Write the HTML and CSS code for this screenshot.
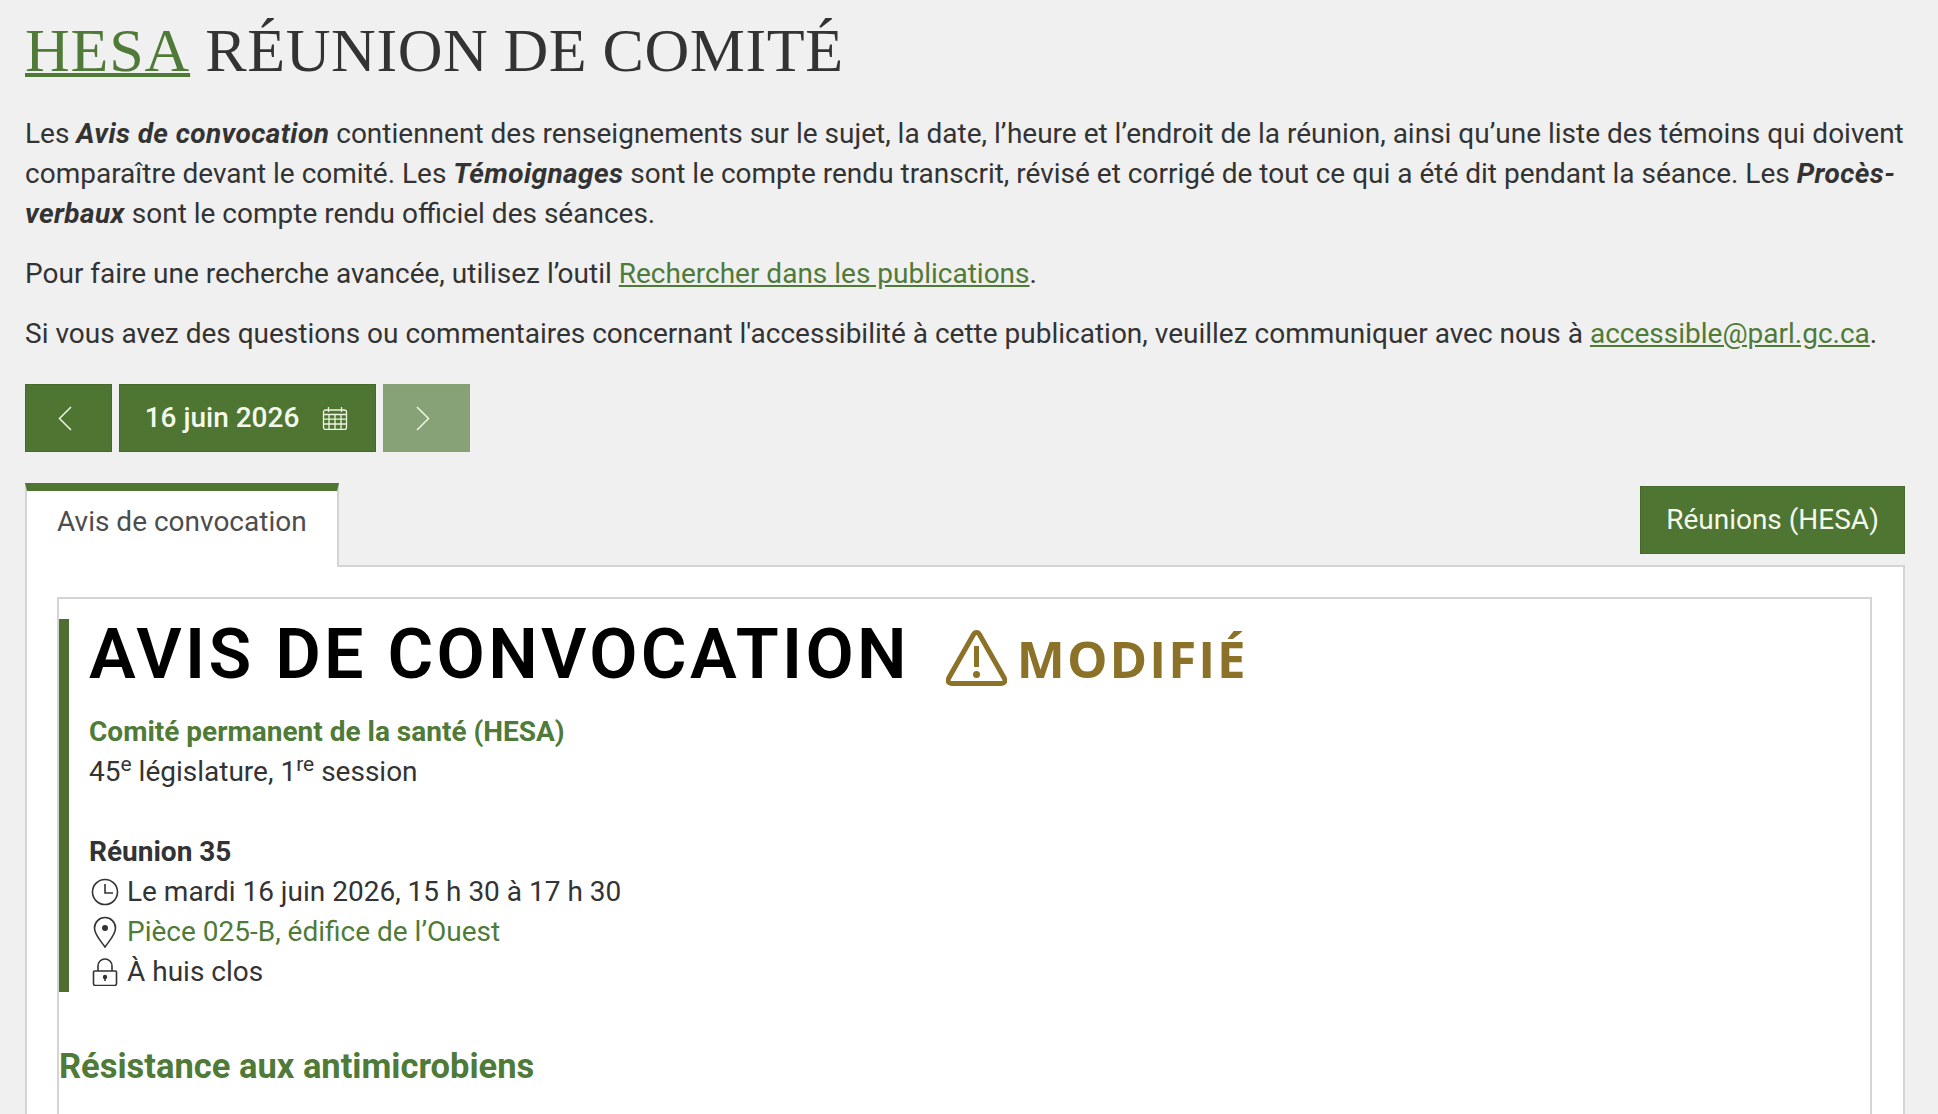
FILE: index.html
```html
<!DOCTYPE html>
<html lang="fr">
<head>
<meta charset="utf-8">
<title>HESA Réunion de comité</title>
<link rel="stylesheet" href="styles.css">
</head>
<body>
<main class="page">
  <h1 class="page-title"><a href="#">HESA</a> RÉUNION DE COMITÉ</h1>
  <p class="intro">Les <em>Avis de convocation</em> contiennent des renseignements sur le sujet, la date, l’heure et l’endroit de la réunion, ainsi qu’une liste des témoins qui doivent comparaître devant le comité. Les <em>Témoignages</em> sont le compte rendu transcrit, révisé et corrigé de tout ce qui a été dit pendant la séance. Les <em>Procès-verbaux</em> sont le compte rendu officiel des séances.</p>
  <p class="intro">Pour faire une recherche avancée, utilisez l’outil <a href="#">Rechercher dans les publications</a>.</p>
  <p class="intro">Si vous avez des questions ou commentaires concernant l'accessibilité à cette publication, veuillez communiquer avec nous à <a href="#">accessible@parl.gc.ca</a>.</p>

  <div class="date-nav">
    <button class="btn btn-arrow" aria-label="Précédent">
      <svg class="chev" viewBox="0 0 14 25"><path d="M13 1 1.500 12.500 13 24"/></svg>
    </button>
    <button class="btn btn-date">16 juin 2026
      <svg class="cal" viewBox="0 0 26 24"><path d="M1.500 6a2 2 0 0 1 2-2h19a2 2 0 0 1 2 2v15.500a2 2 0 0 1-2 2h-19a2 2 0 0 1-2-2zM1.500 8.500h23M1.500 13.200h23M1.500 18h23M7 8.500v15M13 8.500v15M19 8.500v15M6.500 1v5M19.500 1v5"/></svg>
    </button>
    <button class="btn btn-arrow btn-disabled" aria-label="Suivant">
      <svg class="chev" viewBox="0 0 14 25"><path d="M1 1l11.500 11.500L1 24"/></svg>
    </button>
  </div>

  <div class="tabs">
    <div class="tab">Avis de convocation</div>
    <a class="btn btn-meetings" href="#">Réunions (HESA)</a>
  </div>

  <section class="panel">
    <article class="notice">
      <header class="notice-head">
        <div class="notice-title">
          <h2>AVIS DE CONVOCATION</h2>
          <svg class="warn" viewBox="0 0 61 57"><path class="warn-tri" d="M30.500 3.500q-2 0-3 2L2.800 49q-2.400 5 3 5.500h49.400q5.400-.5 3-5.500L33.500 5.500q-1-2-3-2z"/><path class="warn-bar" d="M30.500 17v21"/><circle class="warn-dot" cx="30.500" cy="45.500" r="3.500"/></svg>
          <span class="modified">MODIFIÉ</span>
        </div>
        <div class="committee">Comité permanent de la santé (HESA)</div>
        <div>45<sup>e</sup> législature, 1<sup>re</sup> session</div>
        <div class="meeting">Réunion 35</div>
        <div class="info">
          <svg viewBox="0 0 28 28"><circle cx="14" cy="14" r="12.500"/><path d="M14 6v9h8"/></svg>
          <span>Le mardi 16 juin 2026, 15 h 30 à 17 h 30</span>
        </div>
        <div class="info">
          <svg class="pin" viewBox="0 0 24 32"><path d="M12 31C8 25 1.500 19 1.500 12a10.500 10.500 0 0 1 21 0C22.500 19 16 25 12 31z"/><circle class="fill" cx="12" cy="12" r="3"/></svg>
          <a href="#" class="room">Pièce 025-B, édifice de l’Ouest</a>
        </div>
        <div class="info">
          <svg viewBox="0 0 28 28"><path d="M3.500 13h21a1 1 0 0 1 1 1v11.500a2 2 0 0 1-2 2h-19a2 2 0 0 1-2-2V14a1 1 0 0 1 1-1zM7 13V8a7 7 0 0 1 14 0v5"/><circle class="fill" cx="14" cy="19" r="2.200"/><path d="M14 19v4"/></svg>
          <span>À huis clos</span>
        </div>
      </header>
      <h3 class="topic">Résistance aux antimicrobiens</h3>
    </article>
  </section>
</main>
</body>
</html>
```

FILE: styles.css
```css
* { box-sizing: border-box; }
html, body { height: 100%; overflow: hidden; }
body {
  margin: 0;
  background: #f0f0f0;
  color: #333333;
  font-family: Roboto, "Liberation Sans", sans-serif;
  font-size: 28px;
  line-height: 40px;
}
a { color: #4f7a37; }
.page { padding: 0 33px 0 25px; }
.page-title {
  margin: 0;
  padding: 15px 0 0;
  font-family: "Liberation Serif", serif;
  font-weight: 400;
  font-size: 62px;
  line-height: 70px;
  letter-spacing: 0.600px;
  word-spacing: -1px;
  color: #333333;
}
.page-title a { letter-spacing: 0.800px; text-decoration-thickness: 4px; }
.intro { margin: 29px 0 0; }
.intro + .intro { margin-top: 20px; }
.intro em { font-weight: 700; letter-spacing: 0.400px; }
.date-nav { display: flex; gap: 7px; margin-top: 30px; }
.btn {
  display: flex;
  align-items: center;
  justify-content: center;
  height: 68px;
  border: 1px solid #47692c;
  background: #4e7531;
  color: #f4f9ec;
  font: inherit;
  text-decoration: none;
}
.btn-arrow { width: 87px; padding: 0 7px 0 0; }
.btn-disabled { background: #87a277; border-color: #82a072; }
.btn-date { width: 257px; gap: 23px; padding: 0 2px 0 0; font-weight: 500; }
.chev { width: 14px; height: 25px; fill: none; stroke: #eef6e4; stroke-width: 1.500; }
.cal { width: 26px; height: 24px; fill: none; stroke: #eef6e4; stroke-width: 1.300; }
.tabs {
  display: flex;
  align-items: flex-start;
  justify-content: space-between;
  margin-top: 31px;
  margin-bottom: -2px;
  position: relative;
  z-index: 1;
}
.tab {
  width: 314px;
  height: 84px;
  padding: 11px 0 0 30px;
  background: #ffffff;
  border-top: 8px solid #4e7531;
  border-left: 2px solid #d4d4d4;
  border-right: 2px solid #d4d4d4;
  color: #4d4d4d;
}
.btn-meetings { width: 265px; margin-top: 3px; }
.panel {
  padding: 30px 31px 0 30px;
  background: #ffffff;
  border: 2px solid #d4d4d4;
  border-bottom: 0;
  height: 600px;
}
.notice {
  height: 600px;
  padding: 20px 0 0;
  border: 2px solid #d4d4d4;
}
.notice-head {
  margin: 0;
  padding-left: 20px;
  border-left: 10px solid #4e6f30;
  color: #333333;
}
.notice-title { display: flex; align-items: center; height: 74px; }
.notice-title h2 {
  margin: 0 0 4px;
  font-size: 70px;
  font-weight: 600;
  line-height: 70px;
  letter-spacing: 3.300px;
  color: #000000;
}
.warn { width: 61px; height: 57px; margin: 2px 0 0 36px; flex: none; }
.warn-tri, .warn-bar { fill: none; stroke: #8b7228; stroke-width: 5; }
.warn-dot { fill: #8b7228; }
.modified {
  margin: 4px 0 0 10px;
  font-family: "Open Sans", sans-serif;
  font-weight: 700;
  font-size: 51px;
  line-height: 60px;
  letter-spacing: 2px;
  color: #8b7228;
}
.committee { margin-top: 19px; color: #4f7a37; font-weight: 700; }
.meeting { margin-top: 40px; font-weight: 700; }
.notice-head sup { font-size: 21px; line-height: 0; }
.info { display: flex; align-items: center; gap: 8px; height: 40px; }
.info svg { width: 28px; height: 28px; margin-left: 2px; fill: none; stroke: #333333; stroke-width: 1.600; flex: none; }
.info svg.pin { height: 32px; }
.info svg .fill { fill: #333333; stroke: none; }
.room { text-decoration: none; }
.topic {
  margin: 54px 0 0;
  padding-left: 0;
  color: #4f7a37;
  font-size: 34.500px;
  line-height: 40px;
  font-weight: 700;
}
```
